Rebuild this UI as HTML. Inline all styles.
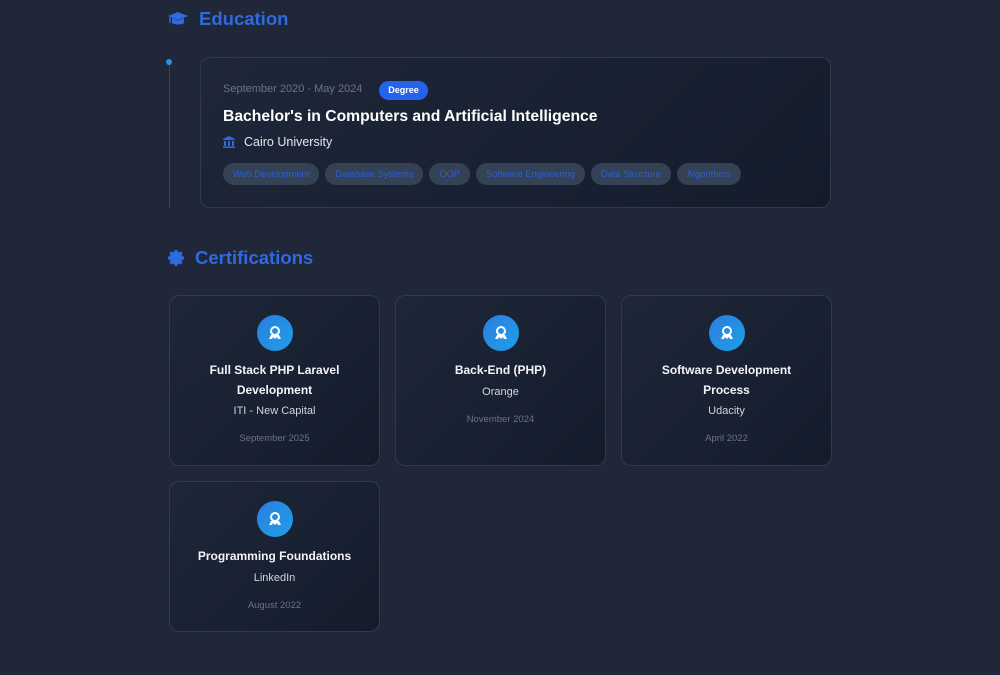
<!DOCTYPE html>
<html><head><meta charset="utf-8"><style>
*{box-sizing:border-box;margin:0;padding:0}
body{width:1000px;height:675px;background:#1f2738;font-family:"Liberation Sans",sans-serif;position:relative;overflow:hidden;color:#fff}
.h{position:absolute;left:168px;display:flex;align-items:center;color:#2f6ae0;font-weight:bold;font-size:18.5px}
.h svg{margin-right:11px}
.line{position:absolute;left:169px;top:62px;width:1px;height:146px;background:#3a4558}
.dot{position:absolute;left:166px;top:59px;width:6px;height:6px;border-radius:50%;background:#2b8fe8}
.card{position:absolute;border:1px solid #2f3a4d;border-radius:10px;background:linear-gradient(135deg,#1e2739,#141c2c)}
.edu{left:200px;top:57px;width:631px;height:151px}
.date{position:absolute;left:22px;top:25px;font-size:11px;color:#6b7384}
.badge{position:absolute;left:178px;top:23px;width:49px;height:19px;border-radius:10px;background:#2563eb;font-size:9px;font-weight:bold;text-align:center;line-height:19px}
.title{position:absolute;left:22px;top:50px;font-size:15.7px;font-weight:bold}
.uni{position:absolute;left:22px;top:77px;font-size:12.5px;color:#e5e7eb;display:flex;align-items:center}
.uni svg{margin-right:9px}
.tags{position:absolute;left:22px;top:105px;display:flex;gap:6px}
.tag{height:22px;border-radius:11px;background:#354155;color:#2f5fcf;font-size:9.3px;display:flex;align-items:center;padding:0 10px}
.cert{width:211px;text-align:center}
.ic{width:36px;height:36px;border-radius:50%;background:linear-gradient(135deg,#2b7de0,#1ea0e8);margin:19px auto 0;display:flex;align-items:center;justify-content:center}
.ct{font-size:12px;font-weight:bold;line-height:19.5px;margin-top:10px;color:#f3f4f6}
.ci{font-size:11px;color:#d1d5db;margin-top:5px}
.cd{font-size:9.5px;color:#6b7384;margin-top:16px}
</style></head><body>
<div class="h" style="top:8px"><svg width="20" height="16" viewBox="0 0 20 16"><path d="M10 1 0 5l10 4 10-4z" fill="#2f6ae0"/><path d="M4 7v5c2 2 10 2 12 0V7l-6 2.5z" fill="#2f6ae0"/><path d="M2 6v6" stroke="#2f6ae0" stroke-width="1.5"/></svg>Education</div>
<div class="line"></div><div class="dot"></div>
<div class="card edu">
<div class="date">September 2020 - May 2024</div>
<div class="badge">Degree</div>
<div class="title">Bachelor's in Computers and Artificial Intelligence</div>
<div class="uni"><svg width="12" height="12" viewBox="0 0 12 12"><path d="M6 0 0 3v1h12V3z M1 5h2v5H1z M5 5h2v5H5z M9 5h2v5H9z M0 10.5h12V12H0z" fill="#2f6ae0"/></svg>Cairo University</div>
<div class="tags"><span class="tag">Web Development</span><span class="tag">Database Systems</span><span class="tag">OOP</span><span class="tag">Software Engineering</span><span class="tag">Data Structure</span><span class="tag">Algorithms</span></div>
</div>
<div class="h" style="top:247px"><svg width="16" height="16" viewBox="0 0 16 16"><circle cx="8" cy="8" r="6.5" fill="#2f6ae0"/><g fill="#2f6ae0"><rect x="6.5" y="0" width="3" height="16"/><rect x="0" y="6.5" width="16" height="3"/><rect x="6.5" y="0" width="3" height="16" transform="rotate(45 8 8)"/><rect x="6.5" y="0" width="3" height="16" transform="rotate(-45 8 8)"/></g></svg>Certifications</div>
<div class="card cert" style="left:169px;top:295px;height:171px"><div class="ic"><svg width="12" height="14" viewBox="0 0 12 14"><circle cx="6" cy="5" r="4" fill="none" stroke="#fff" stroke-width="2"/><path d="M2 9 0 13h3l1-2 2 2 2-2 1 2h3l-2-4" fill="#fff"/></svg></div><div class="ct">Full Stack PHP Laravel<br>Development</div><div class="ci">ITI - New Capital</div><div class="cd">September 2025</div></div>
<div class="card cert" style="left:395px;top:295px;height:171px"><div class="ic"><svg width="12" height="14" viewBox="0 0 12 14"><circle cx="6" cy="5" r="4" fill="none" stroke="#fff" stroke-width="2"/><path d="M2 9 0 13h3l1-2 2 2 2-2 1 2h3l-2-4" fill="#fff"/></svg></div><div class="ct">Back-End (PHP)</div><div class="ci">Orange</div><div class="cd">November 2024</div></div>
<div class="card cert" style="left:621px;top:295px;height:171px"><div class="ic"><svg width="12" height="14" viewBox="0 0 12 14"><circle cx="6" cy="5" r="4" fill="none" stroke="#fff" stroke-width="2"/><path d="M2 9 0 13h3l1-2 2 2 2-2 1 2h3l-2-4" fill="#fff"/></svg></div><div class="ct">Software Development<br>Process</div><div class="ci">Udacity</div><div class="cd">April 2022</div></div>
<div class="card cert" style="left:169px;top:481px;height:151px"><div class="ic"><svg width="12" height="14" viewBox="0 0 12 14"><circle cx="6" cy="5" r="4" fill="none" stroke="#fff" stroke-width="2"/><path d="M2 9 0 13h3l1-2 2 2 2-2 1 2h3l-2-4" fill="#fff"/></svg></div><div class="ct">Programming Foundations</div><div class="ci">LinkedIn</div><div class="cd">August 2022</div></div>
</body></html>
